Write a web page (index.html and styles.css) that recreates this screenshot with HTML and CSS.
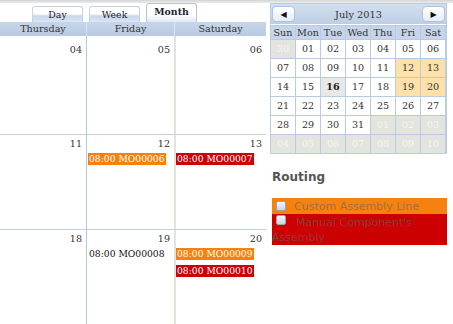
FILE: index.html
```html
<!DOCTYPE html>
<html lang="en">
  <head>
    <meta charset="UTF-8" />
    <title>Production Calendar</title>
    <link rel="stylesheet" href="styles.css">
  </head>
  <body>
    <div class="top-band"></div>
    <div class="page">
      <div class="month-view">
        <div class="tabs">
          <span class="tab">Day</span>
          <span class="tab">Week</span>
          <span class="tab active">Month</span>
        </div>
        <div class="cols head">
          <div>Thursday</div>
          <div>Friday</div>
          <div>Saturday</div>
        </div>
        <div class="weeks">
          <div class="cols week first">
            <div class="day"><div class="num">04</div></div>
            <div class="day"><div class="num">05</div></div>
            <div class="day"><div class="num">06</div></div>
          </div>
          <div class="cols week">
            <div class="day"><div class="num">11</div></div>
            <div class="day">
              <div class="num">12</div>
              <div class="events"><div class="event orange">08:00 MO00006</div></div>
            </div>
            <div class="day">
              <div class="num">13</div>
              <div class="events"><div class="event red">08:00 MO00007</div></div>
            </div>
          </div>
          <div class="cols week last">
            <div class="day"><div class="num">18</div></div>
            <div class="day">
              <div class="num">19</div>
              <div class="events"><div class="event">08:00 MO00008</div></div>
            </div>
            <div class="day">
              <div class="num">20</div>
              <div class="events">
                <div class="event orange">08:00 MO00009</div>
                <div class="event red">08:00 MO00010</div>
              </div>
            </div>
          </div>
        </div>
      </div>

      <div class="side">
        <div class="minical">
          <div class="mc-header">
            <span class="mc-btn">&#9664;</span>
            <span class="mc-title">July 2013</span>
            <span class="mc-btn">&#9654;</span>
          </div>
          <div class="mc-grid">
            <div class="mc-dow">Sun</div><div class="mc-dow">Mon</div><div class="mc-dow">Tue</div><div class="mc-dow">Wed</div><div class="mc-dow">Thu</div><div class="mc-dow">Fri</div><div class="mc-dow">Sat</div>

            <div class="mc-day other">30</div><div class="mc-day">01</div><div class="mc-day">02</div><div class="mc-day">03</div><div class="mc-day">04</div><div class="mc-day">05</div><div class="mc-day">06</div>
            <div class="mc-day">07</div><div class="mc-day">08</div><div class="mc-day">09</div><div class="mc-day">10</div><div class="mc-day">11</div><div class="mc-day shown">12</div><div class="mc-day shown">13</div>
            <div class="mc-day">14</div><div class="mc-day">15</div><div class="mc-day today">16</div><div class="mc-day">17</div><div class="mc-day">18</div><div class="mc-day shown">19</div><div class="mc-day shown">20</div>
            <div class="mc-day">21</div><div class="mc-day">22</div><div class="mc-day">23</div><div class="mc-day">24</div><div class="mc-day">25</div><div class="mc-day">26</div><div class="mc-day">27</div>
            <div class="mc-day">28</div><div class="mc-day">29</div><div class="mc-day">30</div><div class="mc-day">31</div><div class="mc-day other">01</div><div class="mc-day other">02</div><div class="mc-day other">03</div>
            <div class="mc-day other">04</div><div class="mc-day other">05</div><div class="mc-day other">06</div><div class="mc-day other">07</div><div class="mc-day other">08</div><div class="mc-day other">09</div><div class="mc-day other">10</div>
          </div>
        </div>

        <h2 class="routing-title">Routing</h2>
        <div class="routing-list">
          <label class="routing orange"><span class="check"></span>Custom Assembly Line</label>
          <label class="routing red"><span class="check"></span>Manual Component's Assembly</label>
        </div>
      </div>
    </div>
  </body>
</html>
```

FILE: styles.css
```css
* {
  margin: 0;
  padding: 0;
  box-sizing: border-box;
}
body {
  background: #fff;
  font-family: "DejaVu Serif", serif;
  font-size: 9.6px;
  color: #333;
  overflow: hidden;
}
.top-band {
  height: 3px;
  background: linear-gradient(#d4d4d4, #ececec);
}
.page {
  display: flex;
  align-items: flex-start;
}

/* month view */
.month-view {
  width: 266px;
  overflow: hidden;
}
.tabs {
  height: 19px;
  display: flex;
  align-items: flex-end;
  gap: 6px;
  padding-left: 32px;
}
.tab {
  width: 51px;
  height: 16px;
  text-align: center;
  line-height: 16px;
  font-size: 9.4px;
  color: #223;
  border: 1px solid #c4d2e4;
  border-bottom: none;
  border-radius: 3px 3px 0 0;
  background: linear-gradient(#fff 0%, #fff 45%, #c9d7ea 60%, #dbe5f1 100%);
}
.tab.active {
  height: 19px;
  font-weight: bold;
  line-height: 15px;
  border-color: #b5c7df;
  background: linear-gradient(#fff 0%, #fff 60%, #dfe8f3 100%);
}
.cols {
  display: grid;
  grid-template-columns: 86px 88px 92px;
}
.head {
  height: 14px;
  line-height: 14px;
  text-align: center;
  color: #333;
  background: linear-gradient(#c7d6ea, #b7cae3);
}
.head div + div {
  border-left: 1px solid #d9e3f0;
}
.week {
  height: 95px;
  border-top: 1px solid #c2d2e6;
}
.week.first {
  height: 98px;
  border-top: none;
}
.week.last {
  height: 110px;
}
.day:nth-child(2) {
  border-left: 1px solid #b4c7e0;
}
.day:nth-child(3) {
  border-left: 2px solid #e3e3dd;
}
.num {
  text-align: right;
  line-height: 14px;
  padding: 2px 4px 0 0;
  color: #333;
}
.first .num {
  padding-top: 7px;
}
.events {
  padding: 2px 0 0 1px;
}
.event {
  width: 78px;
  height: 12px;
  line-height: 12px;
  margin-bottom: 5px;
  font-size: 9.2px;
  white-space: nowrap;
  overflow: hidden;
  padding-left: 1px;
  color: #111;
}
.event.orange {
  background: #f5820f;
  color: #fff;
}
.event.red {
  background: #cc0008;
  color: #fff;
}
.day:nth-child(3) .events {
  padding-left: 0;
}

/* mini calendar */
.side {
  margin-left: 4px;
  width: 177px;
}
.minical {
  border: 1px solid #bccde3;
}
.mc-header {
  height: 20px;
  display: flex;
  align-items: center;
  justify-content: space-between;
  padding: 0 1px;
  background: linear-gradient(#d3dfee, #bccee6);
}
.mc-btn {
  width: 23px;
  height: 16px;
  line-height: 15px;
  text-align: center;
  font-family: "DejaVu Sans", sans-serif;
  font-size: 8px;
  color: #111;
  border: 1px solid #aec3de;
  border-radius: 4px;
  background: linear-gradient(#fff, #e6edf6);
}
.mc-title {
  color: #333;
  font-size: 9.8px;
}
.mc-grid {
  display: grid;
  grid-template-columns: repeat(7, 24px);
  grid-auto-rows: 18px;
  grid-template-rows: 13px;
  gap: 1px;
  background: #b9cbe3;
  padding-top: 1px;
  margin-top: 1px;
}
.mc-dow {
  text-align: center;
  line-height: 13px;
  background: #c6d5e9;
  color: #333;
}
.mc-day {
  text-align: center;
  line-height: 18px;
  background: #fff;
  color: #333;
}
.mc-day.other {
  background: #e4e4de;
  color: #f4f4f4;
}
.mc-day.shown {
  background: #fde1a9;
}
.mc-day.today {
  background: #e8e8e6;
  font-weight: bold;
  color: #222;
}

/* routing */
.routing-title {
  margin: 16px 0 0 2px;
  font-family: "DejaVu Sans", sans-serif;
  font-size: 12px;
  line-height: 15px;
  color: #555;
}
.routing-list {
  margin: 13px 0 0 2px;
  width: 175px;
}
.routing {
  display: block;
  font-family: "DejaVu Sans", sans-serif;
  font-size: 11px;
  line-height: 15px;
  padding: 1px 0 0 4px;
  color: rgba(100, 100, 100, 0.6);
}
.routing.orange {
  background: #f5820f;
  height: 16px;
}
.routing.red {
  background: #cc0000;
  padding-bottom: 0;
  padding-left: 0;
  text-indent: 4px;
}
.check {
  display: inline-block;
  width: 10px;
  height: 10px;
  margin-right: 8px;
  vertical-align: -1px;
  border: 1px solid #9aa6b4;
  border-radius: 2px;
  background: linear-gradient(#f4f6f8, #cfd6de);
}
.routing.red .check {
  margin-right: 10px;
  vertical-align: 1px;
}
```
